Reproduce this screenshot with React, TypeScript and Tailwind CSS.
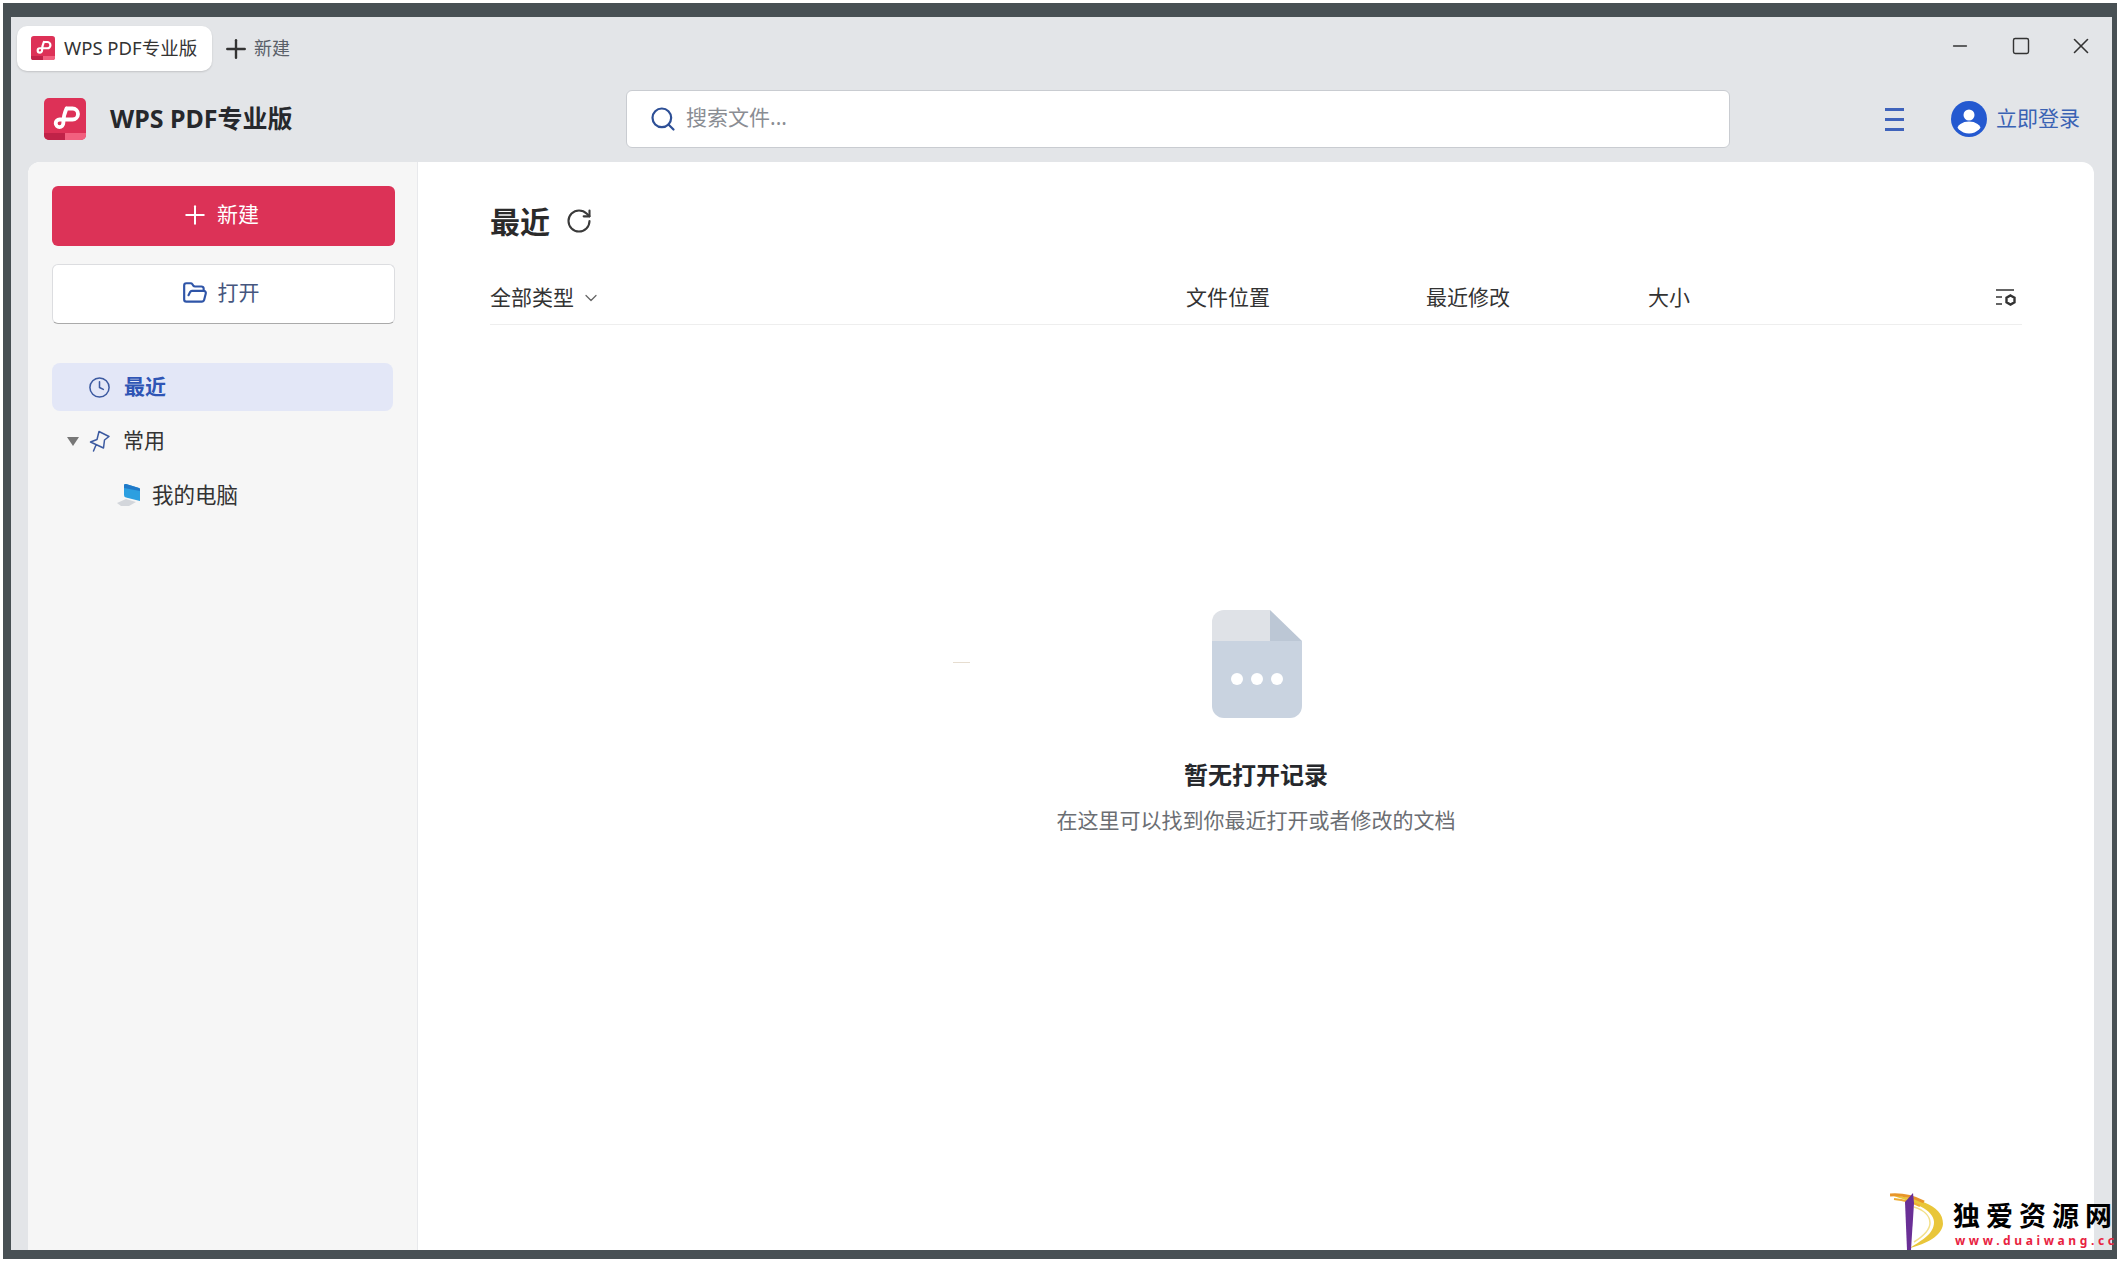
import { ChevronDown, Clock, FolderOpen, Minus, Plus, RotateCw, Search, Square, X } from 'lucide-react';

const font = "font-['Noto_Sans','Noto_Sans_CJK_SC',sans-serif]";

function WpsLogo({ size }: { size: number }) {
  return (
    <svg width={size} height={size} viewBox="0 0 42 42">
      <rect width="42" height="42" rx="5" fill="#dd3157" />
      <path d="M0 35h21v7H5a5 5 0 0 1-5-5z" fill="#c02248" />
      <path d="M21 35h21v2a5 5 0 0 1-5 5H21z" fill="#f2607f" />
      <path
        d="M22.5 10.5h6a5.5 5.5 0 0 1 0 11h-13a3.8 3.8 0 1 0 3.8 3.8c0-5 1-10 3.2-14.8"
        fill="none"
        stroke="#fff"
        strokeWidth="3.8"
        strokeLinecap="round"
        strokeLinejoin="round"
      />
    </svg>
  );
}

function Column({ label, className }: { label: string; className: string }) {
  return <div className={`pt-[2px] text-[21px] text-[#333] ${className}`}>{label}</div>;
}

export default function App() {
  return (
    <div className={`flex h-[1263px] w-[2120px] overflow-hidden bg-white pb-[4px] pl-[3px] pr-[3px] pt-[3px] ${font}`}>
      <div className="relative flex flex-1 bg-[#485054] pb-[9px] pl-[8px] pr-[5px] pt-[14px]">
        <div className="flex flex-1 flex-col bg-[#e3e5e8]">
          {/* Tab bar */}
          <div className="flex items-start justify-between pl-[6px] pr-[18px] pt-[9px]">
            <div className="flex items-center">
              <div className="flex h-[45px] w-[195px] items-center gap-[9px] rounded-[10px] bg-white pb-[1px] pl-[14px] shadow-[0_1px_2px_rgba(0,0,0,0.15)]">
                <WpsLogo size={24} />
                <span className="whitespace-nowrap text-[18.5px] text-[#333]">WPS PDF专业版</span>
              </div>
              <Plus className="ml-[9px] text-[#333]" size={30} strokeWidth={1.9} />
              <span className="ml-[3px] text-[18px] text-[#5a6068]">新建</span>
            </div>
            <div className="flex items-center pt-[7px] text-[#333]">
              <Minus size={22} strokeWidth={1.6} />
              <Square size={20} strokeWidth={1.7} className="ml-[40px]" />
              <X size={26} strokeWidth={1.5} className="ml-[37px]" />
            </div>
          </div>

          {/* Header */}
          <div className="mb-[14px] mt-[19px] flex h-[58px] items-center pl-[33px]">
            <WpsLogo size={42} />
            <div className="ml-[24px] w-[516px] whitespace-nowrap text-[25px] font-bold text-[#26282c]">WPS PDF专业版</div>
            <div className="flex h-[58px] w-[1104px] items-center gap-[9px] rounded-[6px] border border-[#c9ccd1] bg-white pl-[22px]">
              <Search size={28} strokeWidth={1.9} className="text-[#2d4f96]" />
              <span className="pb-[3px] text-[21px] text-[#8a8d93]">搜索文件...</span>
            </div>
            <div className="ml-[155px] flex h-[23px] w-[19px] flex-col justify-between">
              <div className="h-[3px] bg-[#3f63bb]" />
              <div className="h-[3px] bg-[#3f63bb]" />
              <div className="h-[3px] bg-[#3f63bb]" />
            </div>
            <svg className="ml-[47px]" width="36" height="36" viewBox="0 0 36 36">
              <defs>
                <clipPath id="avatar">
                  <circle cx="18" cy="18" r="14.5" />
                </clipPath>
              </defs>
              <circle cx="18" cy="18" r="18" fill="#2459d0" />
              <circle cx="18" cy="14" r="5.5" fill="#fff" />
              <ellipse cx="18" cy="29" rx="12" ry="8.5" fill="#fff" clipPath="url(#avatar)" />
            </svg>
            <span className="ml-[9px] text-[21px] text-[#3a62b4]">立即登录</span>
          </div>

          {/* Card */}
          <div className="ml-[17px] mr-[18px] flex flex-1 overflow-hidden rounded-t-[12px] bg-white">
            <div className="w-[390px] border-r border-[#e8e9ec] bg-[#f6f6f6] pl-[24px] pt-[24px]">
              <div className="flex h-[60px] w-[343px] items-center justify-center gap-[7px] rounded-[6px] bg-[#dc3257] pb-[2px] pr-[8px] text-white">
                <Plus size={30} strokeWidth={1.6} />
                <span className="text-[21px]">新建</span>
              </div>
              <div className="mt-[18px] flex h-[60px] w-[343px] items-center justify-center gap-[10px] rounded-[6px] border border-[#dcdde0] border-b-[#aaa] bg-white pb-[2px] pr-[6px] text-[#2f55a8]">
                <FolderOpen size={26} strokeWidth={2} />
                <span className="text-[21px] text-[#45567e]">打开</span>
              </div>

              <div className="mt-[39px] flex h-[48px] w-[341px] items-center rounded-[8px] bg-[#e3e7f7] pl-[36px]">
                <Clock size={23} strokeWidth={1.6} className="text-[#3c5aa0]" />
                <span className="ml-[13px] text-[21px] font-bold text-[#2f55b5]">最近</span>
              </div>
              <div className="mt-[6px] flex h-[48px] items-center pl-[15px]">
                <div className="h-0 w-0 border-x-[6px] border-t-[9px] border-x-transparent border-t-[#777]" />
                <svg className="ml-[10px]" width="22" height="22" viewBox="0 0 22 22">
                  <path
                    d="M10 1.5l10 5-4.500 3.500-1 8L1.500 12 8 9.500zM7 15l-2.500 6"
                    fill="none"
                    stroke="#3c5aa0"
                    strokeWidth="1.5"
                    strokeLinejoin="round"
                    strokeLinecap="round"
                  />
                </svg>
                <span className="ml-[12px] text-[21px] text-[#333]">常用</span>
              </div>
              <div className="mt-[6px] flex h-[48px] items-center pl-[64px]">
                <svg width="26" height="24" viewBox="0 0 26 24">
                  <path d="M1 20l9-4 10 3-7 4H5z" fill="#d3d6db" />
                  <path d="M8 2.500a1.500 1.500 0 0 1 2-1.500l13 4a1.500 1.500 0 0 1 1 1.500V18l-14-3.500a2.500 2.500 0 0 1-2-2.500z" fill="#2c9fe0" />
                  <path d="M8 2.500a1.500 1.500 0 0 1 2-1.500l13 4a1.500 1.500 0 0 1 1 1.500V8L8 5z" fill="#2079c8" />
                </svg>
                <span className="ml-[10px] text-[21.500px] text-[#333]">我的电脑</span>
              </div>
            </div>

            <div className="flex flex-1 flex-col px-[72px] pt-[37px]">
              <div className="flex h-[44px] items-center">
                <span className="text-[30px] font-bold text-[#2a2a2a]">最近</span>
                <RotateCw size={28} strokeWidth={1.8} className="ml-[15px] text-[#3a3a3a]" />
              </div>

              <div className="mt-[26px] flex h-[56px] items-center border-b border-[#eeeeee]">
                <div className="flex w-[696px] items-center pt-[2px]">
                  <span className="text-[21px] text-[#333]">全部类型</span>
                  <ChevronDown size={20} strokeWidth={1.5} className="ml-[7px] text-[#666]" />
                </div>
                <Column label="文件位置" className="w-[240px]" />
                <Column label="最近修改" className="w-[222px]" />
                <Column label="大小" className="flex-1" />
                <svg className="mr-[5px] mt-[2px]" width="22" height="20" viewBox="0 0 22 20">
                  <path d="M1 2h18M1 9h6M1 16h6" stroke="#333" strokeWidth="1.6" fill="none" />
                  <path d="M15.500 7.500l4 2.300v4.400l-4 2.300-4-2.300V9.800z" fill="none" stroke="#333" strokeWidth="2.400" />
                </svg>
              </div>

              <div className="mt-[285px] flex flex-col items-center">
                <svg className="ml-[2px]" width="90" height="108" viewBox="0 0 90 108">
                  <path d="M58 0H12A12 12 0 0 0 0 12v19h58z" fill="#dfe2e7" />
                  <path d="M58 0l32 31H58z" fill="#bcc7d5" />
                  <path d="M0 31h90v65a12 12 0 0 1-12 12H12A12 12 0 0 1 0 96z" fill="#c9d3e0" />
                  <circle cx="25" cy="69" r="6" fill="#fff" />
                  <circle cx="45" cy="69" r="6" fill="#fff" />
                  <circle cx="65" cy="69" r="6" fill="#fff" />
                </svg>
                <div className="mt-[39px] text-[24px] font-bold leading-[36px] text-[#26282c]">暂无打开记录</div>
                <div className="mt-[11px] text-[21px] leading-[32px] text-[#6b6e73]">在这里可以找到你最近打开或者修改的文档</div>
              </div>
            </div>
          </div>
        </div>

        {/* Watermark */}
        <div className="absolute bottom-[9px] left-[1887px] flex h-[58px] w-[224px]">
          <svg className="shrink-0" width="58" height="58" viewBox="0 0 58 58">
            <path d="M0 3c22 2 54 9 53 29-1 12-17 20-33 24 12-8 24-14 24-26C44 18 24 10 0 3z" fill="#e9c63a" />
            <path d="M24 15c10 3 16 9 16 16 0 8-8 14-16 19" fill="none" stroke="#f3e08a" strokeWidth="1.500" />
            <path d="M0 3c12-1 24 2 34 7" fill="none" stroke="#e8962a" strokeWidth="3" />
            <path d="M4 7c10 1 18 3 26 7" fill="none" stroke="#eead35" strokeWidth="2" />
            <path d="M15 10l8-9 1 10-3 47h-4z" fill="#6a2f96" />
          </svg>
          <div className="ml-[5px] flex flex-col pt-[6px]">
            <div className="whitespace-nowrap text-[27px] font-bold leading-[36px] tracking-[6px] text-black">独爱资源网</div>
            <div className="ml-[2px] whitespace-nowrap text-[12px] font-bold leading-[14px] tracking-[3.600px] text-[#e8233f]">www.duaiwang.cc</div>
          </div>
        </div>
        {/* Stray mark in the empty area */}
        <div className="absolute left-[950px] top-[659px] h-[1px] w-[17px] bg-[#e6ddd0]" />
      </div>
    </div>
  );
}
